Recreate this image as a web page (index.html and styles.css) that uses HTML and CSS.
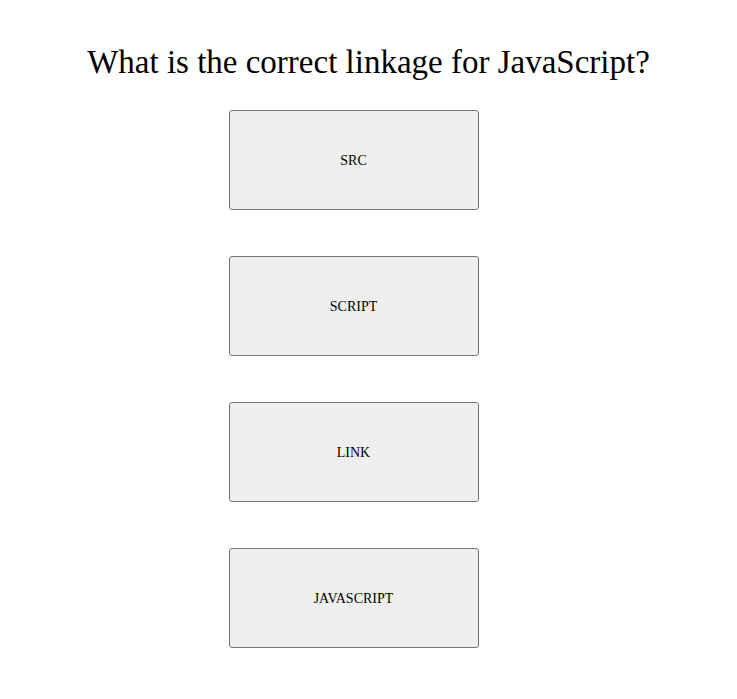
FILE: index.html
```html
<!DOCTYPE html>
<html>
<head>
<meta charset="utf-8">
<link rel="stylesheet" href="styles.css">
</head>
<body>
<main class="quiz">
  <h1 class="question">What is the correct linkage for JavaScript?</h1>
  <div class="answers">
    <button class="answer">SRC</button>
    <button class="answer">SCRIPT</button>
    <button class="answer">LINK</button>
    <button class="answer">JAVASCRIPT</button>
  </div>
</main>
</body>
</html>
```
FILE: styles.css
```css
html, body {
  margin: 0;
  padding: 0;
  background: #ffffff;
}
.quiz {
  font-family: "Liberation Serif", "DejaVu Serif", serif;
  padding-top: 40px;
  text-align: center;
}
.question {
  margin: 0;
  font-size: 33px;
  font-weight: normal;
  line-height: 44px;
  color: #000;
}
.answers {
  display: flex;
  flex-direction: column;
  align-items: center;
  gap: 46px;
  margin-top: 26px;
  padding-right: 30px;
}
.answer {
  width: 250px;
  height: 100px;
  background: #efefef;
  border: 1px solid #767676;
  border-radius: 3px;
  font-family: "Liberation Serif", "DejaVu Serif", serif;
  font-size: 14px;
  color: #000;
  padding: 2px 0 0 0;
}
```
